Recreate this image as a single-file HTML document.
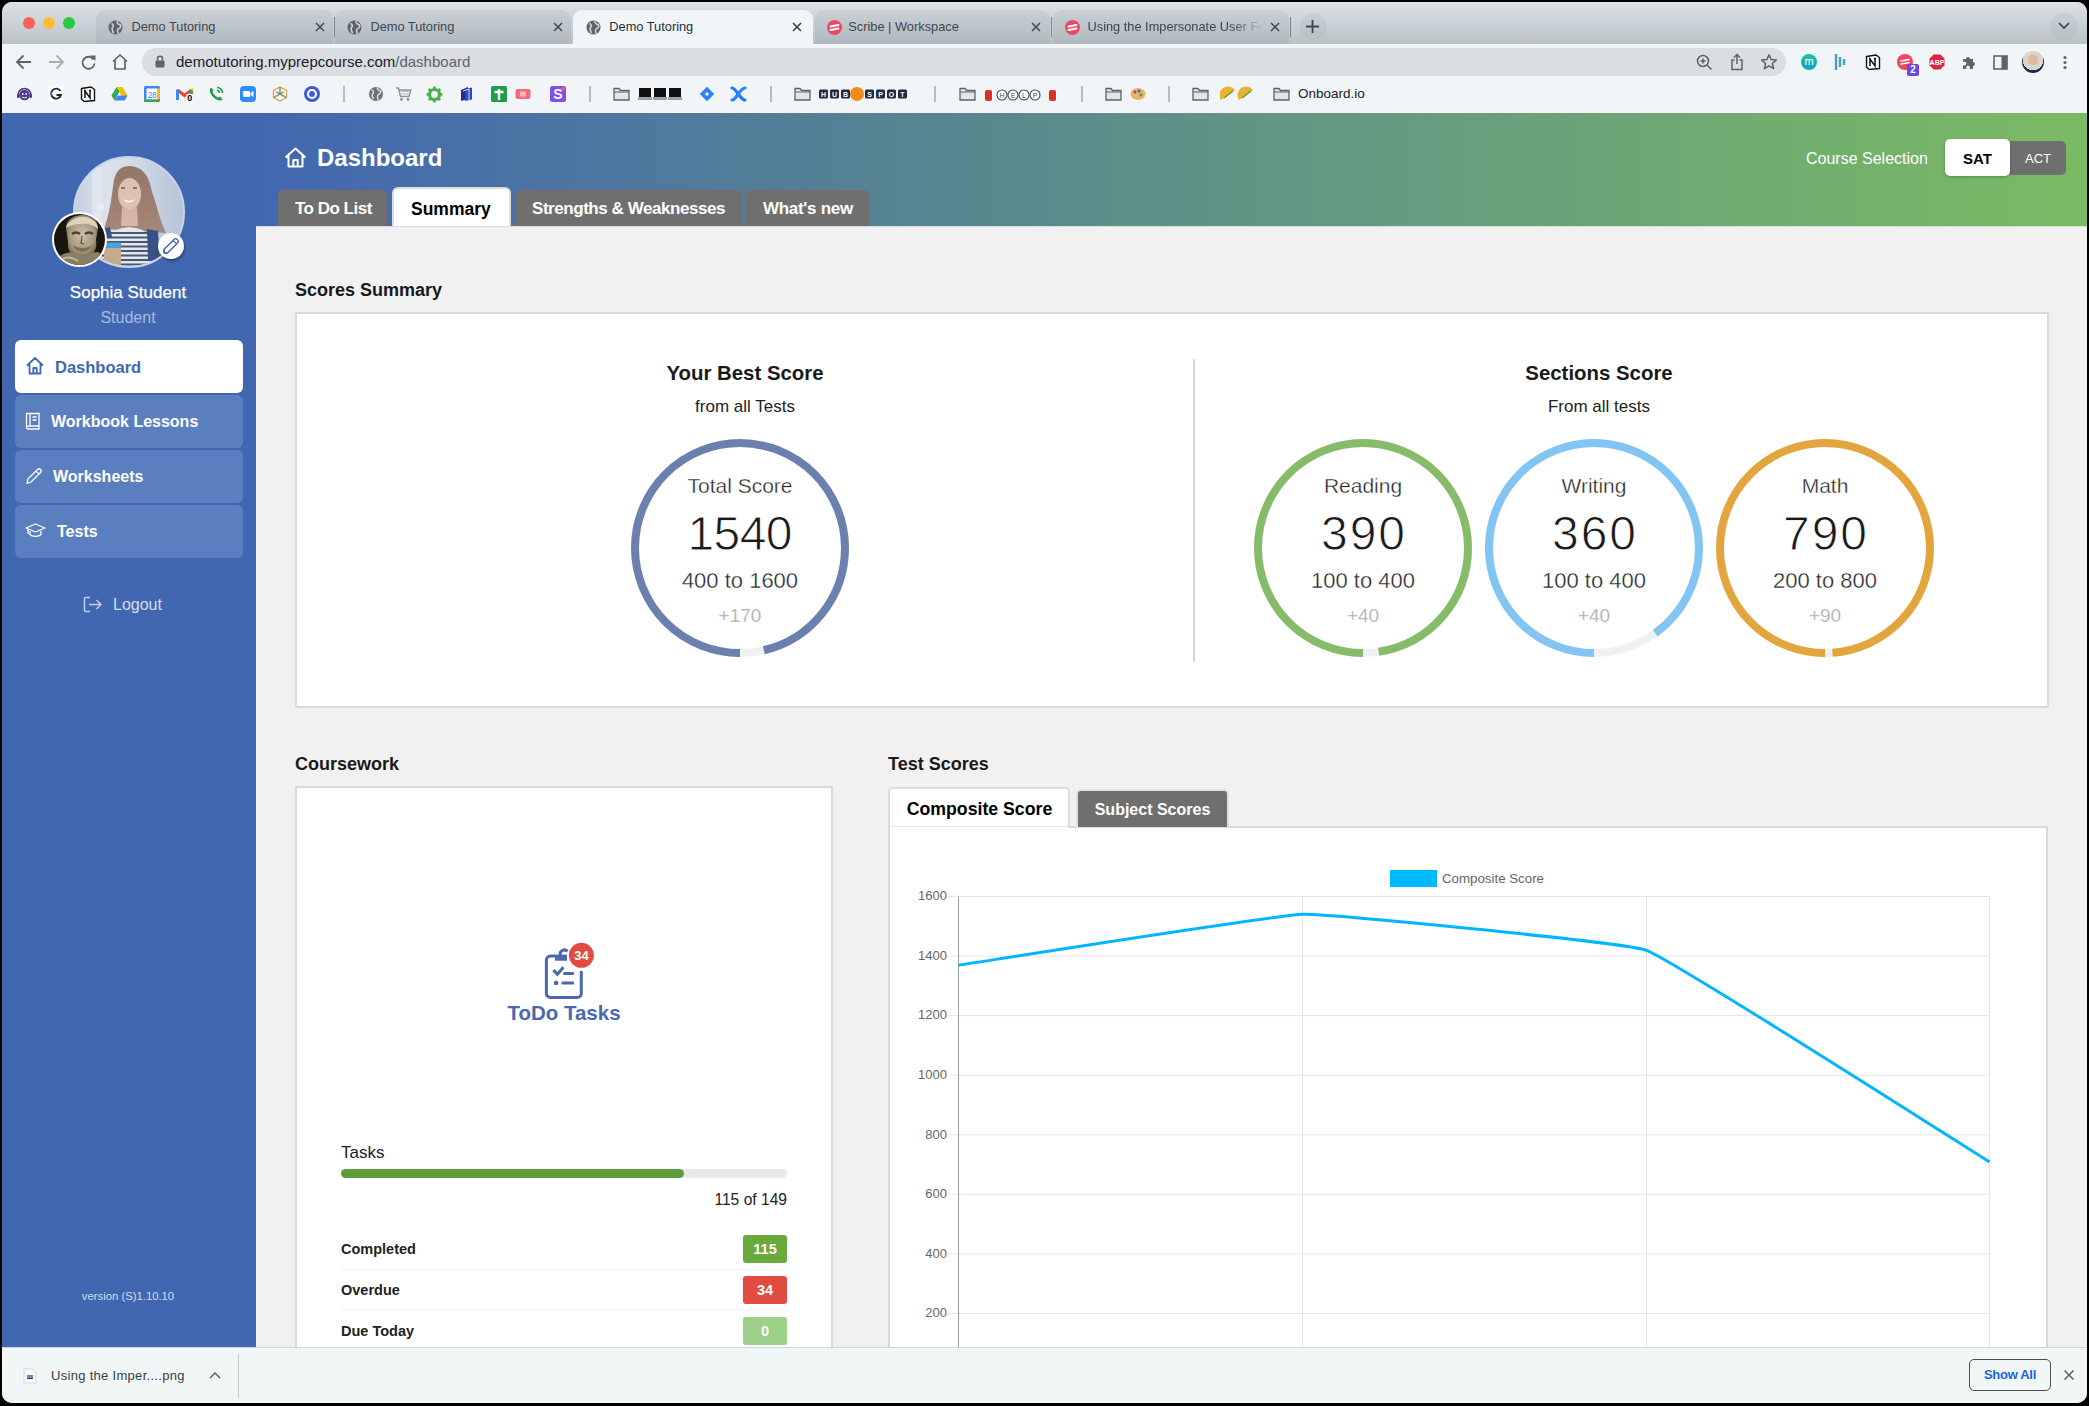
<!DOCTYPE html>
<html><head><meta charset="utf-8">
<style>
*{box-sizing:border-box;margin:0;padding:0}
html,body{width:2089px;height:1406px;overflow:hidden;background:#000;font-family:"Liberation Sans",sans-serif}
.a{position:absolute}
#win{position:absolute;left:2px;top:2px;width:2085px;height:1401px;border-radius:10px;overflow:hidden;background:#f1f1f1}
#c{position:absolute;left:-2px;top:-2px;width:2089px;height:1406px}
#strip{left:0;top:0;width:2089px;height:44px;background:linear-gradient(#dee4e7,#b9c2c8)}
.tab{top:10px;height:34px;border-radius:9px 9px 0 0}
.tab.in{background:rgba(100,112,122,0.10)}
.tab.act{background:#f1f5f8}
.tt{font-size:12.8px;color:#3c4043;top:20px;white-space:nowrap;line-height:14px}
.tsep{top:17px;width:1px;height:20px;background:#7d858c}
#tool{left:0;top:44px;width:2089px;height:69px;background:#f1f5f8}
#page{left:0;top:113px;width:2089px;height:1234px;background:#f1f1f1}
#dl{left:0;top:1347px;width:2089px;height:59px;background:#f1f6f6;border-top:1px solid #cfd6d8}
</style></head><body>
<div id="win"><div id="c">
 <div id="strip" class="a"></div>
 <div id="tool" class="a"></div>
 <div id="page" class="a"></div>
 <!-- SIDEBAR -->
 <div id="side" class="a" style="left:0;top:113px;width:256px;height:1234px;background:#4267b1"></div>
 <!-- HEADER -->
 <div id="hdr" class="a" style="left:256px;top:113px;width:1833px;height:113px;background:linear-gradient(90deg,#4267b1 0%,#58868f 38%,#659b80 62%,#7bbb63 100%)"></div>
 <div class="a" style="left:256px;top:226px;width:1833px;height:1px;background:#dcdcdc"></div>

 <!-- avatar -->
 <div class="a" style="left:74px;top:157px;width:110px;height:110px;border-radius:50%;overflow:hidden">
  <svg width="110" height="110" viewBox="0 0 110 110" style="filter:blur(0.5px)">
   <defs>
    <linearGradient id="bgph" x1="0" y1="0" x2="1" y2="0"><stop offset="0" stop-color="#c3cde0"/><stop offset="0.3" stop-color="#dfe5ee"/><stop offset="0.6" stop-color="#cfd8e6"/><stop offset="1" stop-color="#b4c1d6"/></linearGradient>
    <linearGradient id="hair" x1="0" y1="0" x2="0" y2="1"><stop offset="0" stop-color="#8a6a58"/><stop offset="0.6" stop-color="#9a7460"/><stop offset="1" stop-color="#a07e6c"/></linearGradient>
   </defs>
   <rect width="110" height="110" fill="url(#bgph)"/>
   <rect x="18" y="10" width="10" height="75" fill="#e9edf3" opacity="0.7"/>
   <circle cx="27" cy="50" r="3" fill="#eef2f8"/>
   <path d="M55 9 C44 9 40 18 39 30 C37 45 35 58 30 72 L92 76 C85 62 83 48 78 35 C75 18 68 9 55 9 Z" fill="url(#hair)"/>
   <ellipse cx="55.5" cy="37" rx="11.5" ry="16" fill="#e3bfae"/>
   <path d="M47 31 H51 M59 31 H63" stroke="#6b4a40" stroke-width="1.6"/>
   <path d="M48.5 42 Q55 49 61.5 42 Q55 45.5 48.5 42 Z" fill="#fff"/>
   <path d="M48 50 Q55 55 63 50 L64 69 H47 Z" fill="#d9b2a0"/>
   <path d="M28 110 C28 84 34 72 55 70 C76 72 84 82 88 110 Z" fill="#e6e9ee"/>
   <path d="M31 76 H80 M30 80.5 H82 M29 85 H84 M29 89.5 H85 M28 94 H86 M28 98.5 H87 M28 103 H87 M28 107.5 H88" stroke="#394660" stroke-width="1.9"/>
   <path d="M73 72 L84 74 L86 104 L74 104 Z" fill="#243f7a"/>
   <path d="M30 72 L36 70 L38 80 L31 82 Z" fill="#243f7a"/>
   <rect x="30" y="85.5" width="17" height="5.5" fill="#3b9ad8"/>
   <rect x="30" y="91" width="17" height="19" fill="#c4a482"/>
   <rect x="0" y="0" width="110" height="110" fill="#c8d3e6" opacity="0.12"/>
  </svg>
 </div>
 <div class="a" style="left:73px;top:156px;width:112px;height:112px;border-radius:50%;border:2.5px solid #cad4e7"></div>
 <div class="a" style="left:52px;top:212px;width:55px;height:55px;border-radius:50%;background:#fff;overflow:hidden">
  <svg class="a" style="left:2px;top:2px;border-radius:50%" width="51" height="51" viewBox="0 0 51 51">
   <defs><radialGradient id="bust" cx="0.5" cy="0.45" r="0.55"><stop offset="0" stop-color="#c9bfa8"/><stop offset="0.7" stop-color="#a89a80"/><stop offset="1" stop-color="#6e6350"/></radialGradient></defs>
   <rect width="51" height="51" fill="#16150e"/>
   <path d="M12 14 C12 4 22 1 29 1 C38 1 44 6 44 14 L42 26 C44 36 38 44 29 45 C19 45 13 38 14 28 Z" fill="url(#bust)"/>
   <path d="M12 14 C14 6 24 2 31 3 C39 4 44 9 44 15 C40 11 33 9 27 10 C21 10 15 12 12 14 Z" fill="#ddd3bb"/>
   <path d="M18 20 Q22 17 26 20 M31 20 Q35 17 39 20" stroke="#4a4134" stroke-width="2.2" fill="none"/>
   <path d="M28 22 L27 29 L30 30" stroke="#5a5040" stroke-width="1.2" fill="none"/>
   <path d="M19 31 C21 40 35 40 38 31 C34 35 24 35 19 31 Z" fill="#7c705b"/>
   <path d="M0 51 C4 40 14 36 22 40 C28 43 36 38 44 38 C49 40 51 46 51 51 Z" fill="#8b7d63"/>
   <path d="M8 45 C14 42 20 44 24 47" stroke="#c3b698" stroke-width="2" fill="none"/>
  </svg>
 </div>
 <div class="a" style="left:158px;top:233px;width:26px;height:26px;border-radius:50%;background:#fff;box-shadow:1px 2px 3px rgba(0,0,0,.35)">
  <svg class="a" style="left:0;top:0" width="26" height="26" viewBox="0 0 26 26"><g transform="rotate(-45 13 13)"><rect x="4" y="10.5" width="18" height="5" rx="2.2" fill="none" stroke="#3d5fae" stroke-width="1.3"/><path d="M18.5 10.5 V15.5 M5.5 10.8 L3 13 L5.5 15.2" fill="none" stroke="#3d5fae" stroke-width="1.2"/></g></svg>
 </div>
 <div class="a" style="left:0;top:282px;width:256px;text-align:center;color:#fff;font-size:17px;line-height:22px;-webkit-text-stroke:0.25px #fff">Sophia Student</div>
 <div class="a" style="left:0;top:307px;width:256px;text-align:center;color:#a9bbdf;font-size:16px;line-height:22px">Student</div>

 <!-- nav -->
 <div class="a" style="left:15px;top:340px;width:228px;height:53px;border-radius:6px;background:#fff"></div>
 <div class="a" style="left:15px;top:395px;width:228px;height:53px;border-radius:6px;background:#5b7ebf"></div>
 <div class="a" style="left:15px;top:450px;width:228px;height:53px;border-radius:6px;background:#5b7ebf"></div>
 <div class="a" style="left:15px;top:505px;width:228px;height:53px;border-radius:6px;background:#5b7ebf"></div>
 <svg class="a" style="left:25px;top:356px" width="20" height="19" viewBox="0 0 20 19"><path d="M2 9.5 L10 2 L18 9.5 M4.5 7.5 V17.5 H15.5 V7.5 M8.3 17.5 V12 H11.7 V17.5" fill="none" stroke="#4267b1" stroke-width="1.8" stroke-linejoin="round"/></svg>
 <div class="a" style="left:55px;top:356px;color:#4267b1;font-size:16.5px;font-weight:700;line-height:22px">Dashboard</div>
 <svg class="a" style="left:25px;top:412px" width="16" height="18" viewBox="0 0 16 18"><path d="M1.5 1.5 H14 V14 H3.5 A2 2 0 0 0 1.5 16 Z M1.5 16 A2 2 0 0 0 3.5 17 H14 V14 M5 1.5 V14 M7.5 5 H11.5 M7.5 8 H11.5" fill="none" stroke="#fff" stroke-width="1.3"/></svg>
 <div class="a" style="left:51px;top:411px;color:#fff;font-size:16px;font-weight:700;line-height:22px">Workbook Lessons</div>
 <svg class="a" style="left:25px;top:467px" width="18" height="18" viewBox="0 0 18 18"><path d="M2 16.5 L3 12 L12.5 2.5 A1.8 1.8 0 0 1 15.5 5.5 L6 15 Z M11 4 L14 7" fill="none" stroke="#fff" stroke-width="1.3" stroke-linejoin="round"/></svg>
 <div class="a" style="left:53px;top:466px;color:#fff;font-size:16px;font-weight:700;line-height:22px">Worksheets</div>
 <svg class="a" style="left:25px;top:523px" width="21" height="15" viewBox="0 0 21 15"><path d="M1 5 L10.5 1 L20 5 L10.5 9 Z M5 6.8 V11.5 C7 14 14 14 16 11.5 V6.8 M3 6 V11" fill="none" stroke="#fff" stroke-width="1.3" stroke-linejoin="round"/></svg>
 <div class="a" style="left:57px;top:521px;color:#fff;font-size:16px;font-weight:700;line-height:22px">Tests</div>
 <svg class="a" style="left:83px;top:596px" width="20" height="17" viewBox="0 0 20 17"><path d="M7 1.5 H2.5 A1 1 0 0 0 1.5 2.5 V14.5 A1 1 0 0 0 2.5 15.5 H7 M6 8.5 H18 M13.5 4 L18 8.5 L13.5 13" fill="none" stroke="#c3cee8" stroke-width="1.5" stroke-linejoin="round"/></svg>
 <div class="a" style="left:113px;top:594px;color:#d5ddf0;font-size:16px;line-height:22px">Logout</div>
 <div class="a" style="left:0;top:1289px;width:256px;text-align:center;color:#d3dcf0;font-size:11.3px;line-height:14px">version (S)1.10.10</div>

 <!-- header content -->
 <svg class="a" style="left:284px;top:147px" width="23" height="21" viewBox="0 0 23 21"><path d="M1.5 10.5 L11.5 1.5 L21.5 10.5 M4.5 8 V19.5 H18.5 V8 M9.3 19.5 V13 H13.7 V19.5" fill="none" stroke="#fff" stroke-width="2" stroke-linejoin="round"/></svg>
 <div class="a" style="left:317px;top:143px;color:#fff;font-size:24px;font-weight:700;line-height:30px">Dashboard</div>
 <div class="a" style="left:278px;top:190px;width:109px;height:36px;background:#6f6f6f;border-radius:5px 5px 0 0"></div>
 <div class="a" style="left:392px;top:187px;width:119px;height:39px;background:#fff;border:2px solid #dcdcdc;border-bottom:none;border-radius:6px 6px 0 0"></div>
 <div class="a" style="left:516px;top:190px;width:226px;height:36px;background:#6f6f6f;border-radius:5px 5px 0 0"></div>
 <div class="a" style="left:746px;top:190px;width:123px;height:36px;background:#6f6f6f;border-radius:5px 5px 0 0"></div>
 <div class="a" style="left:295px;top:198px;color:#fff;font-size:17px;font-weight:700;line-height:22px;letter-spacing:-0.5px">To Do List</div>
 <div class="a" style="left:411px;top:198px;color:#000;font-size:17.5px;font-weight:700;line-height:22px">Summary</div>
 <div class="a" style="left:532px;top:198px;color:#fff;font-size:17px;font-weight:700;line-height:22px;letter-spacing:-0.45px">Strengths &amp; Weaknesses</div>
 <div class="a" style="left:763px;top:198px;color:#fff;font-size:17px;font-weight:700;line-height:22px;letter-spacing:-0.3px">What's new</div>
 <div class="a" style="left:1806px;top:149px;color:#fff;font-size:16px;line-height:20px">Course Selection</div>
 <div class="a" style="left:2010px;top:141px;width:56px;height:34px;background:#6f6f6f;border-radius:0 5px 5px 0"></div>
 <div class="a" style="left:1945px;top:139px;width:65px;height:37px;background:#fff;border-radius:5px;box-shadow:0 1px 3px rgba(0,0,0,.25)"></div>
 <div class="a" style="left:1945px;top:149px;width:65px;text-align:center;color:#000;font-size:15px;font-weight:700;line-height:20px">SAT</div>
 <div class="a" style="left:2010px;top:149px;width:56px;text-align:center;color:#fff;font-size:13px;line-height:20px">ACT</div>

 <!-- SCORES SUMMARY -->
 <div class="a" style="left:295px;top:279px;color:#1a1a1a;font-size:18px;font-weight:700;line-height:22px">Scores Summary</div>
 <div class="a" style="left:295px;top:312px;width:1754px;height:396px;background:#fff;border:2px solid #dadada"></div>
 <div class="a" style="left:1193px;top:359px;width:2px;height:303px;background:#d6d6d6"></div>
 <div class="a" style="left:545px;top:361px;width:400px;text-align:center;color:#1a1a1a;font-size:20.4px;font-weight:700;line-height:24px">Your Best Score</div>
 <div class="a" style="left:545px;top:397px;width:400px;text-align:center;color:#222;font-size:17px;line-height:20px">from all Tests</div>
 <div class="a" style="left:1399px;top:361px;width:400px;text-align:center;color:#1a1a1a;font-size:20.4px;font-weight:700;line-height:24px">Sections Score</div>
 <div class="a" style="left:1399px;top:397px;width:400px;text-align:center;color:#222;font-size:17px;line-height:20px">From all tests</div>
 <svg class="a" style="left:630px;top:438px" width="220" height="220" viewBox="0 0 220 220">
  <circle cx="110" cy="110" r="105" fill="none" stroke="#f1f1f1" stroke-width="8"/>
  <circle cx="110" cy="110" r="105" fill="none" stroke="#6c80b0" stroke-width="8" stroke-dasharray="634.99 659.73" transform="rotate(90 110 110)"/>
 </svg>
 <div class="a" style="left:630px;top:475px;width:220px;text-align:center;color:#222;font-size:21px;line-height:21px;-webkit-text-stroke:0.35px #fff">Total Score</div>
 <div class="a" style="left:630px;top:510px;width:220px;text-align:center;color:#1a1a1a;font-size:48px;line-height:48px;-webkit-text-stroke:0.9px #fff;letter-spacing:-0.6px;text-indent:-0.6px">1540</div>
 <div class="a" style="left:630px;top:570px;width:220px;text-align:center;color:#222;font-size:22px;line-height:22px;-webkit-text-stroke:0.35px #fff">400 to 1600</div>
 <div class="a" style="left:630px;top:606px;width:220px;text-align:center;color:#b9b9b9;font-size:19px;line-height:19px">+170</div>
 <svg class="a" style="left:1253px;top:438px" width="220" height="220" viewBox="0 0 220 220">
  <circle cx="110" cy="110" r="105" fill="none" stroke="#f1f1f1" stroke-width="8"/>
  <circle cx="110" cy="110" r="105" fill="none" stroke="#86bb6a" stroke-width="8" stroke-dasharray="643.24 659.73" transform="rotate(90 110 110)"/>
 </svg>
 <div class="a" style="left:1253px;top:475px;width:220px;text-align:center;color:#222;font-size:21px;line-height:21px;-webkit-text-stroke:0.35px #fff">Reading</div>
 <div class="a" style="left:1253px;top:510px;width:220px;text-align:center;color:#1a1a1a;font-size:48px;line-height:48px;-webkit-text-stroke:0.9px #fff;letter-spacing:2px;text-indent:2px">390</div>
 <div class="a" style="left:1253px;top:570px;width:220px;text-align:center;color:#222;font-size:22px;line-height:22px;-webkit-text-stroke:0.35px #fff">100 to 400</div>
 <div class="a" style="left:1253px;top:606px;width:220px;text-align:center;color:#b9b9b9;font-size:19px;line-height:19px">+40</div>
 <svg class="a" style="left:1484px;top:438px" width="220" height="220" viewBox="0 0 220 220">
  <circle cx="110" cy="110" r="105" fill="none" stroke="#f1f1f1" stroke-width="8"/>
  <circle cx="110" cy="110" r="105" fill="none" stroke="#82c4f2" stroke-width="8" stroke-dasharray="593.76 659.73" transform="rotate(90 110 110)"/>
 </svg>
 <div class="a" style="left:1484px;top:475px;width:220px;text-align:center;color:#222;font-size:21px;line-height:21px;-webkit-text-stroke:0.35px #fff">Writing</div>
 <div class="a" style="left:1484px;top:510px;width:220px;text-align:center;color:#1a1a1a;font-size:48px;line-height:48px;-webkit-text-stroke:0.9px #fff;letter-spacing:2px;text-indent:2px">360</div>
 <div class="a" style="left:1484px;top:570px;width:220px;text-align:center;color:#222;font-size:22px;line-height:22px;-webkit-text-stroke:0.35px #fff">100 to 400</div>
 <div class="a" style="left:1484px;top:606px;width:220px;text-align:center;color:#b9b9b9;font-size:19px;line-height:19px">+40</div>
 <svg class="a" style="left:1715px;top:438px" width="220" height="220" viewBox="0 0 220 220">
  <circle cx="110" cy="110" r="105" fill="none" stroke="#f1f1f1" stroke-width="8"/>
  <circle cx="110" cy="110" r="105" fill="none" stroke="#e3a63e" stroke-width="8" stroke-dasharray="651.49 659.73" transform="rotate(90 110 110)"/>
 </svg>
 <div class="a" style="left:1715px;top:475px;width:220px;text-align:center;color:#222;font-size:21px;line-height:21px;-webkit-text-stroke:0.35px #fff">Math</div>
 <div class="a" style="left:1715px;top:510px;width:220px;text-align:center;color:#1a1a1a;font-size:48px;line-height:48px;-webkit-text-stroke:0.9px #fff;letter-spacing:2px;text-indent:2px">790</div>
 <div class="a" style="left:1715px;top:570px;width:220px;text-align:center;color:#222;font-size:22px;line-height:22px;-webkit-text-stroke:0.35px #fff">200 to 800</div>
 <div class="a" style="left:1715px;top:606px;width:220px;text-align:center;color:#b9b9b9;font-size:19px;line-height:19px">+90</div>
 <!-- COURSEWORK -->
 <div class="a" style="left:295px;top:755px;color:#1a1a1a;font-size:18px;font-weight:700;line-height:18px">Coursework</div>
 <div class="a" style="left:295px;top:786px;width:538px;height:640px;background:#fff;border:2px solid #dadada"></div>
 <svg class="a" style="left:540px;top:940px" width="60" height="64" viewBox="0 0 60 64">
  <path d="M15 16.1 H10.4 A4 4 0 0 0 6.4 20.1 V53.4 A4 4 0 0 0 10.4 57.4 H37.3 A4 4 0 0 0 41.3 53.4 V31" fill="none" stroke="#4a67b0" stroke-width="3"/>
  <rect x="15" y="14.6" width="12" height="6.1" fill="#4a67b0"/>
  <path d="M20.3 15.5 A4.2 4.2 0 0 1 27.5 11.5" fill="none" stroke="#4a67b0" stroke-width="3"/>
  <path d="M13.4 30.1 L17.4 34.2 L23.4 27.2" fill="none" stroke="#4a67b0" stroke-width="3"/>
  <path d="M24.5 33.5 H32.8 M22.8 43 H32.8" stroke="#4a67b0" stroke-width="3" stroke-linecap="round"/>
  <circle cx="16.1" cy="43" r="2.3" fill="#4a67b0"/>
  <circle cx="41.4" cy="15.3" r="12.5" fill="#e24c40"/>
  <text x="41.4" y="20" text-anchor="middle" font-family="Liberation Sans" font-size="13" font-weight="700" fill="#fff">34</text>
 </svg>
 <div class="a" style="left:414px;top:1003px;width:300px;text-align:center;color:#4a67b0;font-size:20.5px;font-weight:700;line-height:20px">ToDo Tasks</div>
 <div class="a" style="left:341px;top:1144px;color:#222;font-size:17px;line-height:17px">Tasks</div>
 <div class="a" style="left:341px;top:1169px;width:446px;height:9px;border-radius:5px;background:#e9e9e9"></div>
 <div class="a" style="left:341px;top:1169px;width:343px;height:9px;border-radius:5px;background:#5e9c3b"></div>
 <div class="a" style="left:587px;top:1192px;width:200px;text-align:right;color:#222;font-size:15.6px;line-height:16px">115 of 149</div>
 <div class="a" style="left:341px;top:1242px;color:#222;font-size:14.5px;font-weight:700;line-height:15px">Completed</div>
 <div class="a" style="left:743px;top:1235px;width:44px;height:28px;border-radius:3px;background:#6aa93b;color:#fff;font-size:14.5px;font-weight:700;line-height:29px;text-align:center">115</div>
 <div class="a" style="left:341px;top:1269px;width:446px;height:1px;background:#efefef"></div>
 <div class="a" style="left:341px;top:1283px;color:#222;font-size:14.5px;font-weight:700;line-height:15px">Overdue</div>
 <div class="a" style="left:743px;top:1276px;width:44px;height:28px;border-radius:3px;background:#e24c40;color:#fff;font-size:14.5px;font-weight:700;line-height:29px;text-align:center">34</div>
 <div class="a" style="left:341px;top:1309px;width:446px;height:1px;background:#efefef"></div>
 <div class="a" style="left:341px;top:1324px;color:#222;font-size:14.5px;font-weight:700;line-height:15px">Due Today</div>
 <div class="a" style="left:743px;top:1317px;width:44px;height:28px;border-radius:3px;background:#9ccf88;color:#fff;font-size:14.5px;font-weight:700;line-height:29px;text-align:center">0</div>

 <!-- TEST SCORES -->
 <div class="a" style="left:888px;top:755px;color:#1a1a1a;font-size:18px;font-weight:700;line-height:18px">Test Scores</div>
 <div class="a" style="left:888px;top:826px;width:1160px;height:600px;background:#fff;border:2px solid #dadada"></div>
 <div class="a" style="left:888px;top:787px;width:182px;height:41px;background:#fff;border:2px solid #dcdcdc;border-bottom:none;border-radius:5px 5px 0 0"></div>
 <div class="a" style="left:890px;top:826px;width:178px;height:1px;background:#e6e6e6"></div>
 <div class="a" style="left:1076px;top:789px;width:153px;height:38px;background:#6f6f6f;border:2px solid #e0e0e0;border-bottom:none;border-radius:5px 5px 0 0"></div>
 <div class="a" style="left:889px;top:800px;width:181px;text-align:center;color:#000;font-size:17.7px;font-weight:700;line-height:18px">Composite Score</div>
 <div class="a" style="left:1076px;top:802px;width:153px;text-align:center;color:#fff;font-size:16px;font-weight:700;line-height:16px">Subject Scores</div>
 <svg class="a" style="left:0;top:0" width="2089" height="1406"><line x1="948" y1="896.5" x2="1990" y2="896.5" stroke="#e5e5e5" stroke-width="1"/><text x="947" y="900.2" text-anchor="end" font-family="Liberation Sans" font-size="13" fill="#666">1600</text><line x1="948" y1="956.1" x2="1990" y2="956.1" stroke="#e5e5e5" stroke-width="1"/><text x="947" y="959.8" text-anchor="end" font-family="Liberation Sans" font-size="13" fill="#666">1400</text><line x1="948" y1="1015.6" x2="1990" y2="1015.6" stroke="#e5e5e5" stroke-width="1"/><text x="947" y="1019.3" text-anchor="end" font-family="Liberation Sans" font-size="13" fill="#666">1200</text><line x1="948" y1="1075.2" x2="1990" y2="1075.2" stroke="#e5e5e5" stroke-width="1"/><text x="947" y="1078.9" text-anchor="end" font-family="Liberation Sans" font-size="13" fill="#666">1000</text><line x1="948" y1="1134.8" x2="1990" y2="1134.8" stroke="#e5e5e5" stroke-width="1"/><text x="947" y="1138.5" text-anchor="end" font-family="Liberation Sans" font-size="13" fill="#666">800</text><line x1="948" y1="1194.3" x2="1990" y2="1194.3" stroke="#e5e5e5" stroke-width="1"/><text x="947" y="1198.0" text-anchor="end" font-family="Liberation Sans" font-size="13" fill="#666">600</text><line x1="948" y1="1253.9" x2="1990" y2="1253.9" stroke="#e5e5e5" stroke-width="1"/><text x="947" y="1257.6" text-anchor="end" font-family="Liberation Sans" font-size="13" fill="#666">400</text><line x1="948" y1="1313.5" x2="1990" y2="1313.5" stroke="#e5e5e5" stroke-width="1"/><text x="947" y="1317.2" text-anchor="end" font-family="Liberation Sans" font-size="13" fill="#666">200</text><line x1="948" y1="1373.1" x2="1990" y2="1373.1" stroke="#e5e5e5" stroke-width="1"/><line x1="1302.6" y1="896.5" x2="1302.6" y2="1347" stroke="#e5e5e5" stroke-width="1"/><line x1="1646.5" y1="896.5" x2="1646.5" y2="1347" stroke="#e5e5e5" stroke-width="1"/><line x1="1989.5" y1="896.5" x2="1989.5" y2="1347" stroke="#e5e5e5" stroke-width="1"/><line x1="958.5" y1="896.5" x2="958.5" y2="1347" stroke="#9a9a9a" stroke-width="1"/><path d="M958.5,965.2 C982.6,961.6 1278.4,914.8 1302.6,914.3 C1326.6,913.8 1624.3,942.3 1646.5,950.3 C1672.4,959.6 1965.7,1147.2 1989.7,1162" fill="none" stroke="#00b7ff" stroke-width="3"/><rect x="1390" y="870" width="47" height="17" fill="#00b9ff"/><text x="1442" y="883" font-family="Liberation Sans" font-size="13.3" fill="#666">Composite Score</text></svg>

 <div id="dl" class="a"></div>
 <div class="a" style="left:23px;top:17px;width:12px;height:12px;border-radius:50%;background:#fe5f57"></div>
 <div class="a" style="left:43px;top:17px;width:12px;height:12px;border-radius:50%;background:#febc2e"></div>
 <div class="a" style="left:63px;top:17px;width:12px;height:12px;border-radius:50%;background:#28c840"></div>
 <div class="a tab in" style="left:96px;width:237px"></div>
 <svg class="a" style="left:107.5px;top:20px" width="15" height="15" viewBox="0 0 15 15"><circle cx="7.5" cy="7.5" r="7" fill="#5f6368"/><path d="M3.2 3.5 C5.5 4 6 6.5 4.5 7.5 C3.3 8.5 4.5 10.5 5.5 13.3 M9.2 1.3 C8.7 3 10.3 4.5 11.8 4.6 C13.6 5 12.5 8.3 10.5 8.8 C9 9.2 9.5 11.5 10.3 13.8" fill="none" stroke="#c9cfd4" stroke-width="1.7"/></svg>
 <div class="a tt" style="left:131.5px;color:#3c4650">Demo Tutoring</div>
 <svg class="a" style="left:315px;top:22px" width="10" height="10" viewBox="0 0 10 10"><path d="M1 1 L9 9 M9 1 L1 9" stroke="#3c4650" stroke-width="1.5"/></svg>
 <div class="a tab in" style="left:335px;width:236px"></div>
 <svg class="a" style="left:346.5px;top:20px" width="15" height="15" viewBox="0 0 15 15"><circle cx="7.5" cy="7.5" r="7" fill="#5f6368"/><path d="M3.2 3.5 C5.5 4 6 6.5 4.5 7.5 C3.3 8.5 4.5 10.5 5.5 13.3 M9.2 1.3 C8.7 3 10.3 4.5 11.8 4.6 C13.6 5 12.5 8.3 10.5 8.8 C9 9.2 9.5 11.5 10.3 13.8" fill="none" stroke="#c9cfd4" stroke-width="1.7"/></svg>
 <div class="a tt" style="left:370.4px;color:#3c4650">Demo Tutoring</div>
 <svg class="a" style="left:553px;top:22px" width="10" height="10" viewBox="0 0 10 10"><path d="M1 1 L9 9 M9 1 L1 9" stroke="#3c4650" stroke-width="1.5"/></svg>
 <div class="a tab act" style="left:573px;width:240px"></div>
 <svg class="a" style="left:585.5px;top:20px" width="15" height="15" viewBox="0 0 15 15"><circle cx="7.5" cy="7.5" r="7" fill="#5f6368"/><path d="M3.2 3.5 C5.5 4 6 6.5 4.5 7.5 C3.3 8.5 4.5 10.5 5.5 13.3 M9.2 1.3 C8.7 3 10.3 4.5 11.8 4.6 C13.6 5 12.5 8.3 10.5 8.8 C9 9.2 9.5 11.5 10.3 13.8" fill="none" stroke="#c9cfd4" stroke-width="1.7"/></svg>
 <div class="a tt" style="left:609.3px;color:#1f2f3a">Demo Tutoring</div>
 <svg class="a" style="left:791.7px;top:22px" width="10" height="10" viewBox="0 0 10 10"><path d="M1 1 L9 9 M9 1 L1 9" stroke="#2d3a44" stroke-width="1.5"/></svg>
 <div class="a tab in" style="left:815px;width:235px"></div>
 <svg class="a" style="left:826.5px;top:19.5px" width="15" height="15" viewBox="0 0 15 15"><circle cx="7.5" cy="7.5" r="7.5" fill="#ee4764"/><path d="M3.5 6.5 L11.5 5 M3.5 10 L11.5 8.5" stroke="#fff" stroke-width="1.8" stroke-linecap="round"/></svg>
 <div class="a tt" style="left:848.3px;color:#3c4650">Scribe | Workspace</div>
 <svg class="a" style="left:1031px;top:22px" width="10" height="10" viewBox="0 0 10 10"><path d="M1 1 L9 9 M9 1 L1 9" stroke="#3c4650" stroke-width="1.5"/></svg>
 <div class="a tab in" style="left:1053px;width:236px"></div>
 <svg class="a" style="left:1064.5px;top:19.5px" width="15" height="15" viewBox="0 0 15 15"><circle cx="7.5" cy="7.5" r="7.5" fill="#ee4764"/><path d="M3.5 6.5 L11.5 5 M3.5 10 L11.5 8.5" stroke="#fff" stroke-width="1.8" stroke-linecap="round"/></svg>
 <div class="a tt" style="left:1087.5px;color:#3c4650;width:175px;overflow:hidden;-webkit-mask-image:linear-gradient(90deg,#000 82%,transparent 100%)">Using the Impersonate User Fe</div>
 <svg class="a" style="left:1270.2px;top:22px" width="10" height="10" viewBox="0 0 10 10"><path d="M1 1 L9 9 M9 1 L1 9" stroke="#3c4650" stroke-width="1.5"/></svg>
 <div class="a tsep" style="left:334px"></div>
 <div class="a tsep" style="left:1051px"></div>
 <div class="a tsep" style="left:1290px"></div>
 <div class="a" style="left:1299.5px;top:13px;width:27px;height:27px;border-radius:50%;background:rgba(140,150,160,0.12)"></div>
<svg class="a" style="left:1305px;top:19px" width="15" height="15" viewBox="0 0 15 15"><path d="M7.5 1 V14 M1 7.5 H14" stroke="#3c4650" stroke-width="1.8"/></svg>
 <div class="a" style="left:2050px;top:13px;width:28px;height:28px;border-radius:50%;background:rgba(150,160,170,0.15)"></div>
 <svg class="a" style="left:2058px;top:22px" width="12" height="8" viewBox="0 0 12 8"><path d="M1 1 L6 6 L11 1" fill="none" stroke="#3c4650" stroke-width="1.6"/></svg>
 <svg class="a" style="left:15px;top:54px" width="18" height="16" viewBox="0 0 18 16"><path d="M16 8 H2.5 M8.5 1.5 L2 8 L8.5 14.5" fill="none" stroke="#5f6368" stroke-width="1.8"/></svg>
 <svg class="a" style="left:47px;top:54px" width="18" height="16" viewBox="0 0 18 16"><path d="M2 8 H15.5 M9.5 1.5 L16 8 L9.5 14.5" fill="none" stroke="#a8adb2" stroke-width="1.8"/></svg>
 <svg class="a" style="left:80px;top:54px" width="17" height="17" viewBox="0 0 17 17"><path d="M13.6 5.5 A6 6 0 1 0 14.5 9.5" fill="none" stroke="#5f6368" stroke-width="1.8"/><path d="M10 1.5 H15.5 V7 Z" fill="#5f6368"/></svg>
 <svg class="a" style="left:111px;top:53px" width="18" height="18" viewBox="0 0 18 18"><path d="M2 8.5 L9 2 L16 8.5 M4 6.8 V16 H14 V6.8" fill="none" stroke="#5f6368" stroke-width="1.7" stroke-linejoin="round"/></svg>
 <div class="a" style="left:142px;top:48px;width:1644px;height:28px;border-radius:14px;background:#dadde1"></div>
 <svg class="a" style="left:155px;top:55px" width="10" height="13" viewBox="0 0 10 13"><rect x="0.5" y="5.5" width="9" height="7" rx="1" fill="#5f6368"/><path d="M2.5 5.5 V3.8 A2.5 2.5 0 0 1 7.5 3.8 V5.5" fill="none" stroke="#5f6368" stroke-width="1.5"/></svg>
 <div class="a" style="left:176px;top:54px;font-size:15px;line-height:16px;color:#202124;white-space:nowrap">demotutoring.myprepcourse.com<span style="color:#5f6368">/dashboard</span></div>
 <svg class="a" style="left:1696px;top:54px" width="17" height="17" viewBox="0 0 17 17"><circle cx="7" cy="7" r="5.5" fill="none" stroke="#5f6368" stroke-width="1.5"/><path d="M11 11 L15.5 15.5 M7 4.5 V9.5 M4.5 7 H9.5" stroke="#5f6368" stroke-width="1.5"/></svg>
 <svg class="a" style="left:1730px;top:53px" width="14" height="18" viewBox="0 0 14 18"><path d="M4.5 7 H2 V16.5 H12 V7 H9.5 M7 11 V1.5 M4 4.5 L7 1.5 L10 4.5" fill="none" stroke="#5f6368" stroke-width="1.5"/></svg>
 <svg class="a" style="left:1760px;top:53px" width="18" height="18" viewBox="0 0 18 18"><path d="M9 1.8 L11.2 6.6 L16.3 7.1 L12.4 10.5 L13.6 15.6 L9 12.9 L4.4 15.6 L5.6 10.5 L1.7 7.1 L6.8 6.6 Z" fill="none" stroke="#5f6368" stroke-width="1.5" stroke-linejoin="round"/></svg>
 <div class="a" style="left:1801px;top:54px;width:16px;height:16px;border-radius:50%;background:linear-gradient(#1ec0a4,#0ea5c8)"></div>
 <div class="a" style="left:1801px;top:53px;width:16px;text-align:center;color:#fff;font-size:11px;line-height:16px">m</div>
 <svg class="a" style="left:1834px;top:53px" width="14" height="18" viewBox="0 0 14 18"><path d="M2 1 V17 M6 4 V14 M10 6 V12" stroke="#4a9fc0" stroke-width="2.4"/></svg>
 <svg class="a" style="left:1865px;top:54px" width="16" height="16" viewBox="0 0 16 16"><path d="M1.5 2.5 L11 1 L14.5 3.5 V14.5 L4 15.5 L1.5 13 Z" fill="#fff" stroke="#111" stroke-width="1.4"/><path d="M5 12 V5 L10 12 V4.5 M4 5 H6 M9 4.5 H11" stroke="#111" stroke-width="1.5" fill="none"/></svg>
 <div class="a" style="left:1897px;top:54px;width:16px;height:16px;border-radius:50%;background:#ee4764"></div>
 <svg class="a" style="left:1897px;top:54px" width="16" height="16" viewBox="0 0 16 16"><path d="M4 7 L12 5.5 M4 10 L12 8.5" stroke="#fff" stroke-width="1.6" stroke-linecap="round"/></svg>
 <div class="a" style="left:1907px;top:64px;width:12px;height:12px;border-radius:2px;background:#6a48d8;color:#fff;font-size:10px;line-height:12px;text-align:center;font-weight:700">2</div>
 <svg class="a" style="left:1929px;top:54px" width="16" height="16" viewBox="0 0 16 16"><path d="M4.7 0.5 H11.3 L15.5 4.7 V11.3 L11.3 15.5 H4.7 L0.5 11.3 V4.7 Z" fill="#e0233f"/><text x="8" y="11" text-anchor="middle" font-family="Liberation Sans" font-weight="700" font-size="7" fill="#fff">ABP</text></svg>
 <svg class="a" style="left:1961px;top:54px" width="16" height="16" viewBox="0 0 16 16"><path d="M2 5 H5 A2 2 0 1 1 9 5 H12 V8 A2 2 0 1 1 12 12 V15 H8.5 A2 2 0 1 0 5.5 15 H2 V11 A2 2 0 1 0 2 8 Z" fill="#5f6368"/></svg>
 <svg class="a" style="left:1993px;top:55px" width="15" height="15" viewBox="0 0 15 15"><rect x="1" y="1" width="13" height="13" fill="none" stroke="#5f6368" stroke-width="1.6"/><rect x="8.5" y="1" width="5.5" height="13" fill="#5f6368"/></svg>
 <div class="a" style="left:2022px;top:51px;width:22px;height:22px;border-radius:50%;background:radial-gradient(circle at 50% 40%,#e0b8a0 0 30%,#d9d4cc 31% 60%,#1f2a44 61%)"></div>
 <svg class="a" style="left:2061px;top:55px" width="8" height="16" viewBox="0 0 8 16"><circle cx="4" cy="2.5" r="1.6" fill="#5f6368"/><circle cx="4" cy="7.5" r="1.6" fill="#5f6368"/><circle cx="4" cy="12.5" r="1.6" fill="#5f6368"/></svg>
 <svg class="a" style="left:16px;top:86px" width="17" height="16" viewBox="0 0 17 16"><path d="M2 9 A6.5 6.5 0 0 1 15 9" fill="none" stroke="#4b3a8a" stroke-width="1.5"/><circle cx="8.5" cy="9" r="5.3" fill="#4b3a8a"/><rect x="1" y="8" width="2.5" height="4" rx="1" fill="#4b3a8a"/><rect x="13.5" y="8" width="2.5" height="4" rx="1" fill="#4b3a8a"/><path d="M6 11 Q8.5 13 11 11" stroke="#fff" fill="none" stroke-width="1"/><circle cx="6.8" cy="8" r="0.9" fill="#fff"/><circle cx="10.2" cy="8" r="0.9" fill="#fff"/></svg>
 <div class="a" style="left:48px;top:86px;width:16px;height:16px;background:#fff;border-radius:3px"></div><svg class="a" style="left:48px;top:86px" width="16" height="16" viewBox="0 0 16 16"><path d="M12.5 5 A5 5 0 1 0 13 9 H8.5" fill="none" stroke="#222" stroke-width="1.8"/><path d="M3.3 6.5 A5 5 0 0 0 3.3 9.5" stroke="#3b82f6" stroke-width="1.8" fill="none"/></svg>
 <svg class="a" style="left:80px;top:86px" width="16" height="16" viewBox="0 0 16 16"><path d="M1.5 2.5 L11 1 L14.5 3.5 V14.5 L4 15.5 L1.5 13 Z" fill="#fff" stroke="#111" stroke-width="1.4"/><path d="M5 12 V5 L10 12 V4.5 M4 5 H6 M9 4.5 H11" stroke="#111" stroke-width="1.5" fill="none"/></svg>
 <svg class="a" style="left:111px;top:86px" width="17" height="15" viewBox="0 0 17 15"><path d="M5.5 1 H11.5 L16.5 9.5 L13.5 14.5 Z" fill="#fbbc04"/><path d="M5.5 1 L0.5 9.5 L3.5 14.5 L8.5 5.5 Z" fill="#34a853"/><path d="M3.5 14.5 H13.5 L16.5 9.5 H6.5 Z" fill="#4285f4"/></svg>
 <svg class="a" style="left:144px;top:86px" width="16" height="16" viewBox="0 0 16 16"><rect width="16" height="16" rx="1.5" fill="#4285f4"/><rect x="2.5" y="2.5" width="11" height="11" fill="#fff"/><text x="8" y="11.8" text-anchor="middle" font-family="Liberation Sans" font-size="8.5" letter-spacing="-0.5" fill="#4285f4">28</text><rect x="0" y="13.5" width="13.5" height="2.5" fill="#34a853"/><rect x="13.5" y="2.5" width="2.5" height="11" fill="#fbbc04"/><path d="M13.5 13.5 H16 L13.5 16 Z" fill="#ea4335"/></svg>
 <svg class="a" style="left:176px;top:86px" width="17" height="16" viewBox="0 0 17 16"><path d="M1.5 4 L8.5 9.5 L15.5 4" fill="none" stroke="#ea4335" stroke-width="3"/><path d="M0 3.5 H3 V14 H0 Z" fill="#4285f4"/><path d="M14 3.5 H17 V14 H14 Z" fill="#34a853"/><path d="M14 3.5 L17 2 V5 Z" fill="#fbbc04"/><rect x="10.5" y="8" width="6.5" height="8" fill="#fff"/><text x="13.7" y="15.3" text-anchor="middle" font-family="Liberation Sans" font-weight="700" font-size="9" fill="#000">0</text></svg>
 <svg class="a" style="left:208px;top:86px" width="16" height="16" viewBox="0 0 16 16"><path d="M3 1.5 C1 3 1.5 7 5 11 C8.5 14.5 12.5 15.5 14.5 13.5 L12 10.5 L10 11.5 C8 10.5 5.5 8 4.5 6 L5.5 4 Z" fill="#1e9e4a"/><path d="M9 1.5 A5.5 5.5 0 0 1 14.5 7 M9 4.5 A2.5 2.5 0 0 1 11.5 7" fill="none" stroke="#1e9e4a" stroke-width="1.6"/></svg>
 <svg class="a" style="left:240px;top:86px" width="16" height="16" viewBox="0 0 16 16"><rect width="16" height="16" rx="4" fill="#2d8cff"/><rect x="3" y="5" width="7" height="6" rx="1" fill="#fff"/><path d="M10.5 7 L13.5 5 V11 L10.5 9 Z" fill="#fff"/></svg>
 <svg class="a" style="left:272px;top:86px" width="16" height="16" viewBox="0 0 16 16"><path d="M8 1 L14.5 4.5 V11.5 L8 15 L1.5 11.5 V4.5 Z" fill="none" stroke="#e8a33b" stroke-width="1.3"/><path d="M8 1 V8 L14.5 11.5 M8 8 L1.5 11.5" stroke="#3aa56b" stroke-width="1.3" fill="none"/><path d="M4.5 6 L8 8 L11.5 6" stroke="#d9534f" stroke-width="1.3" fill="none"/></svg>
 <svg class="a" style="left:304px;top:86px" width="16" height="16" viewBox="0 0 16 16"><circle cx="8" cy="8" r="8" fill="#3b5bdb"/><circle cx="8" cy="8" r="4" fill="none" stroke="#fff" stroke-width="2.2"/></svg>
 <div class="a" style="left:343px;top:86px;width:2px;height:16px;background:#b8bcc0"></div>
 <svg class="a" style="left:368px;top:86px" width="16" height="16" viewBox="0 0 16 16"><circle cx="8" cy="8" r="7" fill="#6d7278"/><path d="M3.5 4 C6 4.5 6 7 4.5 8 C3.5 9 4.5 11 5.5 13 M9.5 1.5 C9 3 10.5 4.5 12 4.5 C13.5 5 12.5 8 10.5 8.5 C9 9 9.5 11 10 14" fill="none" stroke="#d6dade" stroke-width="1.6"/></svg>
 <svg class="a" style="left:395px;top:86px" width="17" height="16" viewBox="0 0 17 16"><path d="M1 2 H3.5 L5.5 10.5 H14 L16 4 H4.5" fill="none" stroke="#8e9398" stroke-width="1.4"/><path d="M6 5.5 H14.5 M6.5 8 H14" stroke="#b9bdc1" stroke-width="1.2"/><circle cx="6.5" cy="13.5" r="1.4" fill="#8e9398"/><circle cx="13" cy="13.5" r="1.4" fill="#8e9398"/></svg>
 <svg class="a" style="left:426px;top:86px" width="17" height="17" viewBox="0 0 17 17"><circle cx="8.5" cy="8.5" r="5" fill="none" stroke="#4caf50" stroke-width="3.2"/><path d="M8.5 0.5 V3.5 M8.5 13.5 V16.5 M0.5 8.5 H3.5 M13.5 8.5 H16.5 M2.8 2.8 L5 5 M12 12 L14.2 14.2 M14.2 2.8 L12 5 M5 12 L2.8 14.2" stroke="#4caf50" stroke-width="2.6"/></svg>
 <svg class="a" style="left:459px;top:86px" width="15" height="16" viewBox="0 0 15 16"><path d="M2 4 L9 1 V13 L2 15 Z" fill="#1d2f8f"/><path d="M6 3 L13 1.5 V13.5 L6 15 Z" fill="#2a49c4"/><path d="M4 5 L10 3 V14" stroke="#fff" stroke-width="0.8" fill="none"/></svg>
 <svg class="a" style="left:491px;top:86px" width="16" height="16" viewBox="0 0 16 16"><rect width="16" height="16" rx="1.5" fill="#1e9e4a"/><path d="M8 3 V14 M3.5 6 H12.5" stroke="#fff" stroke-width="2.4"/></svg>
 <svg class="a" style="left:515px;top:88px" width="16" height="12" viewBox="0 0 16 12"><rect x="0.5" y="1" width="15" height="10" rx="2" fill="#f06b7b"/><rect x="5" y="3.5" width="6" height="5" fill="#f9b5be"/></svg>
 <svg class="a" style="left:550px;top:86px" width="16" height="16" viewBox="0 0 16 16"><rect width="16" height="16" rx="2.5" fill="#7b4ff0"/><text x="8" y="13" text-anchor="middle" font-family="Liberation Sans" font-weight="700" font-size="14" fill="#fff">S</text><circle cx="13" cy="3" r="2" fill="#ff5a5a"/></svg>
 <div class="a" style="left:589px;top:86px;width:2px;height:16px;background:#b8bcc0"></div>
 <svg class="a" style="left:613px;top:87px" width="17" height="14" viewBox="0 0 17 14"><path d="M1 1.5 H6 L7.5 3.5 H16 V13 H1 Z" fill="#e3e5e8" stroke="#5f6368" stroke-width="1.3"/><path d="M1 5 H16" stroke="#5f6368" stroke-width="1.2"/></svg>
 <svg class="a" style="left:638px;top:86px" width="46" height="16" viewBox="0 0 46 16"><g fill="#111"><rect x="1" y="2" width="12" height="9"/><rect x="16" y="2" width="12" height="9"/><rect x="31" y="2" width="12" height="9"/></g><g fill="#9aa0a6"><rect x="0" y="11" width="14" height="3"/><rect x="15" y="11" width="14" height="3"/><rect x="30" y="11" width="14" height="3"/></g></svg>
 <svg class="a" style="left:699px;top:86px" width="16" height="16" viewBox="0 0 16 16"><path d="M8 0.8 L15.2 8 L8 15.2 L0.8 8 Z" fill="#2684ff"/><path d="M8 6 L10 8 L8 10 L6 8 Z" fill="#fff"/></svg>
 <svg class="a" style="left:730px;top:85px" width="17" height="18" viewBox="0 0 17 18"><path d="M2 3 C6 2.5 10 15 15 15" fill="none" stroke="#1d7afc" stroke-width="3.2" stroke-linecap="round"/><path d="M2 15 C6 15.5 10 3 15 3" fill="none" stroke="#2684ff" stroke-width="3.2" stroke-linecap="round"/></svg>
 <div class="a" style="left:770px;top:86px;width:2px;height:16px;background:#b8bcc0"></div>
 <svg class="a" style="left:794px;top:87px" width="17" height="14" viewBox="0 0 17 14"><path d="M1 1.5 H6 L7.5 3.5 H16 V13 H1 Z" fill="#e3e5e8" stroke="#5f6368" stroke-width="1.3"/><path d="M1 5 H16" stroke="#5f6368" stroke-width="1.2"/></svg>
 <svg class="a" style="left:819px;top:87px" width="90" height="14" viewBox="0 0 90 14"><rect x="0" y="2.5" width="9" height="9" rx="1.5" fill="#1f2a44"/><text x="4.5" y="10" text-anchor="middle" font-family="Liberation Sans" font-weight="700" font-size="7" fill="#fff">H</text><rect x="11" y="2.5" width="9" height="9" rx="1.5" fill="#1f2a44"/><text x="15.5" y="10" text-anchor="middle" font-family="Liberation Sans" font-weight="700" font-size="7" fill="#fff">U</text><rect x="22" y="2.5" width="9" height="9" rx="1.5" fill="#1f2a44"/><text x="26.5" y="10" text-anchor="middle" font-family="Liberation Sans" font-weight="700" font-size="7" fill="#fff">B</text><rect x="46" y="2.5" width="9" height="9" rx="1.5" fill="#1f2a44"/><text x="50.5" y="10" text-anchor="middle" font-family="Liberation Sans" font-weight="700" font-size="7" fill="#fff">S</text><rect x="57" y="2.5" width="9" height="9" rx="1.5" fill="#1f2a44"/><text x="61.5" y="10" text-anchor="middle" font-family="Liberation Sans" font-weight="700" font-size="7" fill="#fff">P</text><rect x="68" y="2.5" width="9" height="9" rx="1.5" fill="#1f2a44"/><text x="72.5" y="10" text-anchor="middle" font-family="Liberation Sans" font-weight="700" font-size="7" fill="#fff">O</text><rect x="79" y="2.5" width="9" height="9" rx="1.5" fill="#1f2a44"/><text x="83.5" y="10" text-anchor="middle" font-family="Liberation Sans" font-weight="700" font-size="7" fill="#fff">T</text><circle cx="38" cy="7" r="7" fill="#f08c1a"/></svg>
 <div class="a" style="left:934px;top:86px;width:2px;height:16px;background:#b8bcc0"></div>
 <svg class="a" style="left:959px;top:87px" width="17" height="14" viewBox="0 0 17 14"><path d="M1 1.5 H6 L7.5 3.5 H16 V13 H1 Z" fill="#e3e5e8" stroke="#5f6368" stroke-width="1.3"/><path d="M1 5 H16" stroke="#5f6368" stroke-width="1.2"/></svg>
 <svg class="a" style="left:984px;top:86px" width="74" height="16" viewBox="0 0 74 16"><rect x="1" y="4" width="7" height="11" rx="2" fill="#d8322c"/><rect x="65" y="4" width="7" height="11" rx="2" fill="#d8322c"/><circle cx="18" cy="9" r="5" fill="#fff" stroke="#3a4a60" stroke-width="1.1"/><text x="18" y="11.5" text-anchor="middle" font-family="Liberation Sans" font-size="7" fill="#3a4a60">H</text><circle cx="29" cy="9" r="5" fill="#fff" stroke="#3a4a60" stroke-width="1.1"/><text x="29" y="11.5" text-anchor="middle" font-family="Liberation Sans" font-size="7" fill="#3a4a60">E</text><circle cx="40" cy="9" r="5" fill="#fff" stroke="#3a4a60" stroke-width="1.1"/><text x="40" y="11.5" text-anchor="middle" font-family="Liberation Sans" font-size="7" fill="#3a4a60">L</text><circle cx="51" cy="9" r="5" fill="#fff" stroke="#3a4a60" stroke-width="1.1"/><text x="51" y="11.5" text-anchor="middle" font-family="Liberation Sans" font-size="7" fill="#3a4a60">P</text></svg>
 <div class="a" style="left:1081px;top:86px;width:2px;height:16px;background:#b8bcc0"></div>
 <svg class="a" style="left:1105px;top:87px" width="17" height="14" viewBox="0 0 17 14"><path d="M1 1.5 H6 L7.5 3.5 H16 V13 H1 Z" fill="#e3e5e8" stroke="#5f6368" stroke-width="1.3"/><path d="M1 5 H16" stroke="#5f6368" stroke-width="1.2"/></svg>
 <svg class="a" style="left:1130px;top:86px" width="16" height="16" viewBox="0 0 16 16"><ellipse cx="8" cy="8" rx="7.5" ry="6" fill="#e7b46a"/><circle cx="5" cy="6" r="1.5" fill="#d33"/><circle cx="9" cy="5" r="1.5" fill="#36c"/><circle cx="11" cy="9" r="1.5" fill="#3a3"/></svg>
 <div class="a" style="left:1168px;top:86px;width:2px;height:16px;background:#b8bcc0"></div>
 <svg class="a" style="left:1192px;top:87px" width="17" height="14" viewBox="0 0 17 14"><path d="M1 1.5 H6 L7.5 3.5 H16 V13 H1 Z" fill="#e3e5e8" stroke="#5f6368" stroke-width="1.3"/><path d="M1 5 H16" stroke="#5f6368" stroke-width="1.2"/></svg>
 <svg class="a" style="left:1220px;top:86px" width="36" height="16" viewBox="0 0 36 16"><path d="M1 14 A8 8 0 0 1 15 4 Z" fill="#e8b233"/><path d="M19 14 A8 8 0 0 1 33 4 Z" fill="#e8b233"/><path d="M4 12 L13 5 M22 12 L31 5" stroke="#6a9a2a" stroke-width="1.5"/></svg>
 <svg class="a" style="left:1273px;top:87px" width="17" height="14" viewBox="0 0 17 14"><path d="M1 1.5 H6 L7.5 3.5 H16 V13 H1 Z" fill="#e3e5e8" stroke="#5f6368" stroke-width="1.3"/><path d="M1 5 H16" stroke="#5f6368" stroke-width="1.2"/></svg>
 <div class="a" style="left:1298px;top:86px;font-size:13.5px;line-height:16px;color:#202124">Onboard.io</div>
 <svg class="a" style="left:23px;top:1368px" width="14" height="16" viewBox="0 0 14 16"><path d="M1 1 H9.5 L13 4.5 V15 H1 Z" fill="#fafafa" stroke="#d5d8da" stroke-width="1"/><rect x="4" y="7" width="6" height="2" fill="#4a8af0"/><rect x="4" y="9.5" width="6" height="1.5" fill="#333"/></svg>
 <div class="a" style="left:51px;top:1369px;font-size:13px;line-height:14px;color:#3c4043;white-space:nowrap;letter-spacing:0.3px">Using the Imper....png</div>
 <svg class="a" style="left:209px;top:1371px" width="12" height="8" viewBox="0 0 12 8"><path d="M1 7 L6 2 L11 7" fill="none" stroke="#5f6368" stroke-width="1.5"/></svg>
 <div class="a" style="left:238px;top:1354px;width:1px;height:44px;background:#c4c8cb"></div>
 <div class="a" style="left:1969px;top:1359px;width:82px;height:32px;border:1px solid #4a4f54;border-radius:5px"></div>
 <div class="a" style="left:1969px;top:1368px;width:82px;text-align:center;font-size:13px;font-weight:700;line-height:14px;color:#1a64d6;letter-spacing:-0.3px">Show All</div>
 <svg class="a" style="left:2063px;top:1369px" width="12" height="12" viewBox="0 0 12 12"><path d="M1.5 1.5 L10.5 10.5 M10.5 1.5 L1.5 10.5" stroke="#5f6368" stroke-width="1.6"/></svg>

</div></div>
</body></html>
